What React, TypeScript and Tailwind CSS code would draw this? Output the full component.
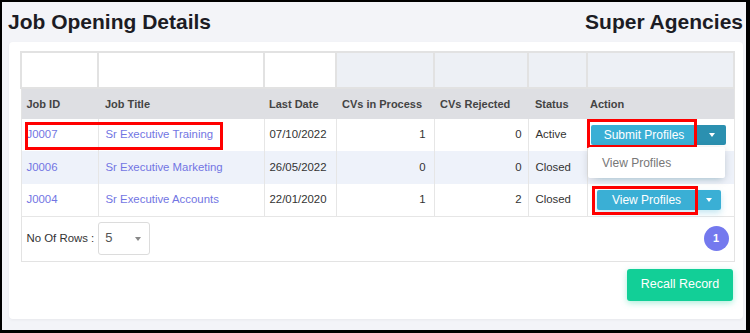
import React from "react";

type Job = {
  id: string;
  title: string;
  lastDate: string;
  inProcess: number;
  rejected: number;
  status: string;
  action: string;
  striped?: boolean;
};

const jobs: Job[] = [
  { id: "J0007", title: "Sr Executive Training", lastDate: "07/10/2022", inProcess: 1, rejected: 0, status: "Active", action: "submit" },
  { id: "J0006", title: "Sr Executive Marketing", lastDate: "26/05/2022", inProcess: 0, rejected: 0, status: "Closed", action: "covered", striped: true },
  { id: "J0004", title: "Sr Executive Accounts", lastDate: "22/01/2020", inProcess: 1, rejected: 2, status: "Closed", action: "view" },
];

function Caret({ color = "border-t-white" }: { color?: string }) {
  return <span className={`w-0 h-0 border-x-[3.5px] border-x-transparent border-t-[4px] ${color}`} />;
}

/* split button: main label + caret */
function SplitButton({ label, menuOpen }: { label: string; menuOpen?: boolean }) {
  if (menuOpen) {
    return (
      <div className="relative inline-flex h-[20px]">
        <button className="w-[106px] h-full bg-[#3aafd5] text-white text-[12px] rounded-l-[2px]">{label}</button>
        <button className="w-[29px] h-full bg-[#2b90b0] rounded-r-[2px] flex items-center justify-center">
          <Caret />
        </button>
        <div className="absolute left-[-3px] top-[22px] w-[137px] h-[31px] bg-white rounded-[2px] shadow-[0_2px_8px_rgba(0,0,0,0.15)] flex items-center pl-[14px] text-[12px] text-[#777] z-10">
          View Profiles
        </div>
      </div>
    );
  }
  return (
    <div className="inline-flex h-[20px] shadow-[0_3px_6px_rgba(58,175,213,0.3)] rounded-[2px]">
      <button className="w-[100px] h-full bg-[#3aafd5] text-white text-[12px] rounded-l-[2px]">{label}</button>
      <button className="w-[24px] h-full bg-[#3aafd5] border-l border-[#55bbdc] rounded-r-[2px] flex items-center justify-center">
        <Caret />
      </button>
    </div>
  );
}

export default function App() {
  return (
    <div className="relative w-[750px] h-[333px] overflow-hidden bg-[#f3f4f8] border-t-2 border-l-2 border-r-[4px] border-b-[3px] border-black font-['Liberation_Sans',Arial,sans-serif]">
      {/* page title */}
      <div className="h-[40px] flex items-center justify-between pl-[6px] pr-[3px]">
        <h1 className="text-[21px] font-bold text-[#1c1c24]">Job Opening Details</h1>
        <h2 className="text-[21px] font-bold text-[#1c1c24]">Super Agencies</h2>
      </div>

      {/* card */}
      <div className="ml-[7px] mr-[3px] bg-white rounded-[4px] shadow-[0_1px_3px_rgba(0,0,0,0.05)] pl-[11px] pr-[10px] pt-[9px] pb-[18px] flex flex-col">
        <table className="w-[713px] table-fixed border-collapse border border-[#e3e3e3] text-[11.4px] text-[#333]">
          <colgroup>
            <col className="w-[77px]" />
            <col className="w-[166px]" />
            <col className="w-[72px]" />
            <col className="w-[98px]" />
            <col className="w-[94px]" />
            <col className="w-[59px]" />
            <col className="w-[147px]" />
          </colgroup>
          <thead>
            {/* filter row */}
            <tr className="h-[36px]">
              <td className="border-2 border-[#e2e2e2] bg-white" />
              <td className="border-2 border-[#e2e2e2] bg-white" />
              <td className="border-2 border-[#e2e2e2] bg-white" />
              <td className="border-2 border-[#e2e2e2] bg-[#edf0f5]" />
              <td className="border-2 border-[#e2e2e2] bg-[#edf0f5]" />
              <td className="border-2 border-[#e2e2e2] bg-[#edf0f5]" />
              <td className="border-2 border-[#e2e2e2] bg-[#edf0f5]" />
            </tr>
            <tr className="h-[31px] bg-[#dedfe3] text-[11px] font-bold text-[#444] text-left">
              <th className="pl-[5px] font-bold">Job ID</th>
              <th className="pl-[7px] font-bold">Job Title</th>
              <th className="pl-[5px] font-bold">Last Date</th>
              <th className="pl-[6px] font-bold">CVs in Process</th>
              <th className="pl-[6px] font-bold">CVs Rejected</th>
              <th className="pl-[7px] font-bold">Status</th>
              <th className="pl-[3px] font-bold">Action</th>
            </tr>
          </thead>
          <tbody>
            {jobs.map((job, i) => (
              <tr key={job.id} className={`${i === 1 ? "h-[33px]" : "h-[32px]"} ${job.striped ? "bg-[#eef2fa]" : "bg-white"}`}>
                <td className="border-x border-[#e6e6e6] pl-[5px] text-[#7275e3]">{job.id}</td>
                <td className="border-x border-[#e6e6e6] pl-[7px] text-[#7275e3]">{job.title}</td>
                <td className="border-x border-[#e6e6e6] pl-[5px]">{job.lastDate}</td>
                <td className="border-x border-[#e6e6e6] pr-[8px] text-right">{job.inProcess}</td>
                <td className="border-x border-[#e6e6e6] pr-[6px] text-right">{job.rejected}</td>
                <td className="border-x border-[#e6e6e6] pl-[7px]">{job.status}</td>
                <td className="border-x border-[#e6e6e6] pr-[4px] text-center">
                  {job.action === "submit" ? (
                    <SplitButton label="Submit Profiles" menuOpen />
                  ) : job.action === "covered" ? (
                    /* sits under the open menu of the row above */
                    <SplitButton label="" />
                  ) : (
                    <SplitButton label="View Profiles" />
                  )}
                </td>
              </tr>
            ))}
          </tbody>
          <tfoot>
            <tr className="h-[45px]">
              <td colSpan={7} className="border-t border-[#e6e6e6] pl-[5px] pr-[5px]">
                <div className="flex items-center justify-between">
                  <div className="flex items-center gap-[4px]">
                    <span className="text-[11.4px] text-[#333]">No Of Rows :</span>
                    <div className="w-[52px] h-[33px] border border-[#dcdcdc] rounded-[3px] flex items-center justify-between pl-[6px] pr-[8px]">
                      <span className="text-[13px] text-[#555] -mt-[2px]">5</span>
                      <Caret color="border-t-[#888]" />
                    </div>
                  </div>
                  <div className="w-[25px] h-[25px] rounded-full bg-[#7479ee] text-white text-[11px] font-bold flex items-center justify-center">
                    1
                  </div>
                </div>
              </td>
            </tr>
          </tfoot>
        </table>

        <div className="mt-[7px] flex justify-end">
          <button className="w-[106px] h-[32px] bg-[#12cf97] text-white text-[12.5px] rounded-[3px] shadow-[0_2px_6px_rgba(18,207,151,0.35)]">
            Recall Record
          </button>
        </div>
      </div>

      {/* red annotation boxes */}
      <div className="absolute left-[23px] top-[120px] w-[198px] h-[28px] border-[3px] border-[#f00] pointer-events-none" />
      <div className="absolute left-[585px] top-[117px] w-[110px] h-[29px] border-[3px] border-[#f00] pointer-events-none" />
      <div className="absolute left-[590px] top-[184px] w-[106px] h-[29px] border-[3px] border-[#f00] pointer-events-none" />
    </div>
  );
}
